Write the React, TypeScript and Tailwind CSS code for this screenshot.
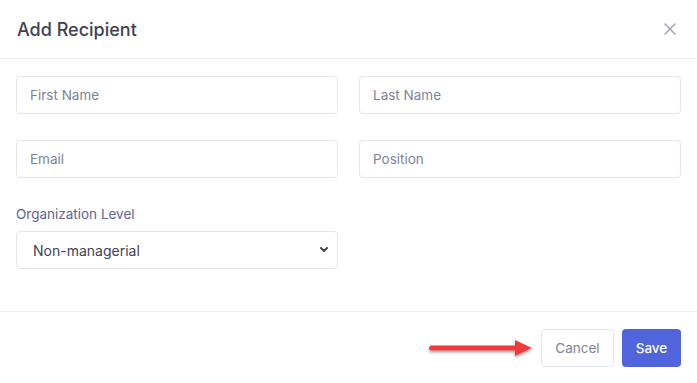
import React from "react";

function TextInput({ placeholder }: { placeholder: string }) {
  return (
    <input
      type="text"
      placeholder={placeholder}
      className="h-[38px] w-full rounded-[4px] border border-[#e4e6ef] bg-white px-[13px] text-[13.5px] text-[#3f4254] outline-none placeholder:text-[#7e8299]"
    />
  );
}

function ArrowPointer() {
  return (
    <svg width="110" height="26" viewBox="0 0 110 26" className="-mr-[2px]">
      <defs>
        <filter id="sh" x="-10%" y="-50%" width="120%" height="200%">
          <feDropShadow dx="0" dy="2" stdDeviation="1.5" floodColor="#000" floodOpacity="0.35" />
        </filter>
      </defs>
      <g filter="url(#sh)" fill="#ee3b3b">
        <rect x="4" y="10.5" width="90" height="5" rx="2.5" />
        <path d="M90 5 L107 13 L90 21 Z" />
      </g>
    </svg>
  );
}

export default function App() {
  return (
    <div className="h-[383px] w-[697px] bg-white font-['Inter',sans-serif]">
      <div className="flex h-[59px] items-center justify-between border-b border-[#eff0f4] pl-[17px] pr-[20px]">
        <h2 className="text-[18px] font-medium text-[#3f4254]">Add Recipient</h2>
        <button className="text-[#a1a5b7]">
          <svg width="14" height="14" viewBox="0 0 14 14" fill="none" stroke="currentColor" strokeWidth="1.5" strokeLinecap="round">
            <path d="M2 2 L12 12 M12 2 L2 12" />
          </svg>
        </button>
      </div>

      <div className="px-[16px] pb-[42px] pt-[17px]">
        <div className="grid grid-cols-2 gap-x-[21px] gap-y-[26px]">
          <TextInput placeholder="First Name" />
          <TextInput placeholder="Last Name" />
          <TextInput placeholder="Email" />
          <TextInput placeholder="Position" />
          <div>
            <label className="mb-[7px] block text-[13.5px] leading-[20px] text-[#5b6596]">
              Organization Level
            </label>
            <div className="relative">
              <select className="h-[38px] w-full appearance-none rounded-[4px] border border-[#e4e6ef] bg-white pl-[16px] text-[14px] text-[#3f4254] outline-none">
                <option>Non-managerial</option>
                <option>Managerial</option>
              </select>
              <svg
                className="pointer-events-none absolute right-[9px] top-[15px]"
                width="10"
                height="8"
                viewBox="0 0 10 8"
                fill="none"
                stroke="#3f4254"
                strokeWidth="2"
                strokeLinecap="round"
                strokeLinejoin="round"
              >
                <path d="M2 2 L5 5 L8 2" />
              </svg>
            </div>
          </div>
        </div>
      </div>

      <div className="flex items-center justify-end gap-[8px] border-t border-[#eff0f4] px-[16px] pt-[17px]">
        <ArrowPointer />
        <button className="h-[38px] w-[73px] rounded-[4px] border border-[#e4e6ef] bg-white text-[13.5px] text-[#7e8299]">
          Cancel
        </button>
        <button className="h-[38px] w-[59px] rounded-[4px] bg-[#5064dc] text-[13.5px] font-medium text-white">
          Save
        </button>
      </div>
    </div>
  );
}
